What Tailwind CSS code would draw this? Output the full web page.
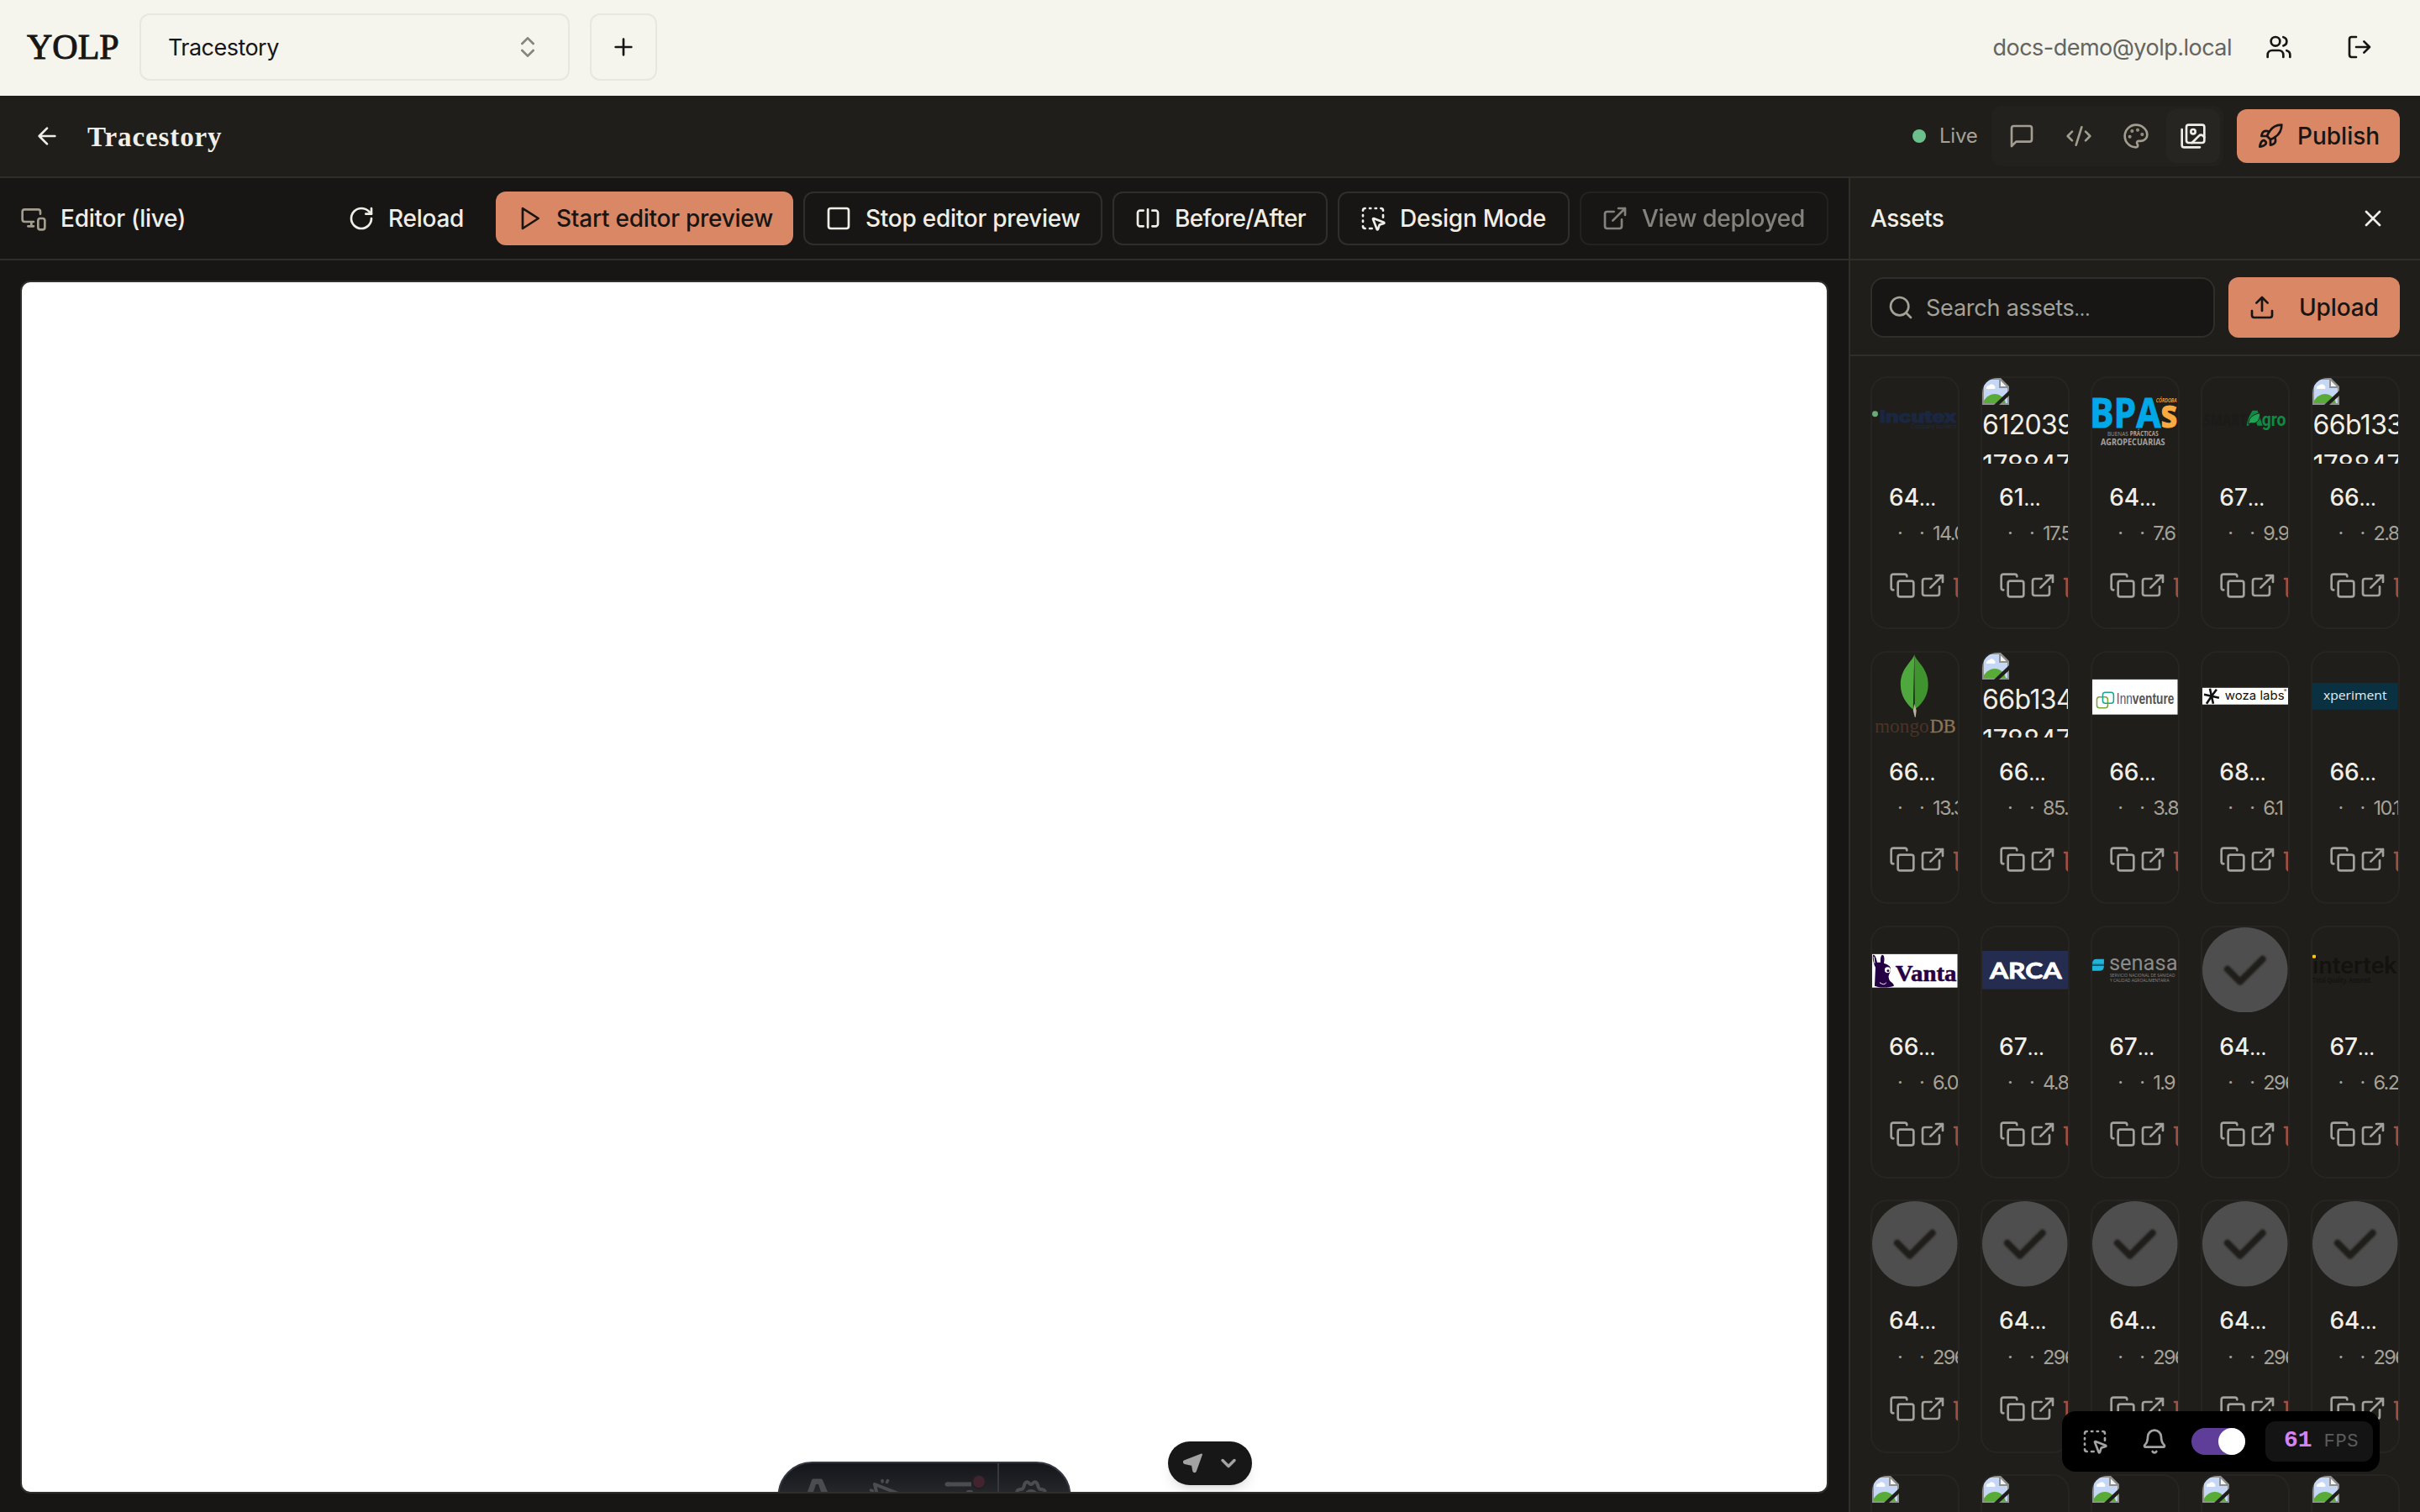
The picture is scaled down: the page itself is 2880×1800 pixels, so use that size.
<!DOCTYPE html>
<html lang="en">
<head>
    <meta charset="UTF-8">
    <meta name="viewport" content="width=device-width, initial-scale=1.0">
    <title>YOLP - Tracestory</title>
    <script src="https://cdn.jsdelivr.net/npm/@tailwindcss/browser@4"></script>
</head>
<body class="h-[1800px] w-[2880px] overflow-hidden bg-[#171614] font-[Inter,sans-serif] text-[28px] leading-none text-[#f0eee6]">
    <svg class="hidden" xmlns="http://www.w3.org/2000/svg">
        <symbol id="chevrons" viewBox="0 0 24 24"><path d="m7 15 5 5 5-5M7 9l5-5 5 5"/></symbol>
        <symbol id="plus" viewBox="0 0 24 24"><path d="M5 12h14M12 5v14"/></symbol>
        <symbol id="users" viewBox="0 0 24 24"><path d="M16 21v-2a4 4 0 0 0-4-4H6a4 4 0 0 0-4 4v2"/><circle cx="9" cy="7" r="4"/><path d="M22 21v-2a4 4 0 0 0-3-3.870M16 3.130a4 4 0 0 1 0 7.750"/></symbol>
        <symbol id="logout" viewBox="0 0 24 24"><path d="m16 17 5-5-5-5M21 12H9M9 21H5a2 2 0 0 1-2-2V5a2 2 0 0 1 2-2h4"/></symbol>
        <symbol id="back" viewBox="0 0 24 24"><path d="m12 19-7-7 7-7M19 12H5"/></symbol>
        <symbol id="message" viewBox="0 0 24 24"><path d="M21 15a2 2 0 0 1-2 2H7l-4 4V5a2 2 0 0 1 2-2h14a2 2 0 0 1 2 2z"/></symbol>
        <symbol id="code" viewBox="0 0 24 24"><path d="m18 16 4-4-4-4M6 8l-4 4 4 4M14.500 4l-5 16"/></symbol>
        <symbol id="palette" viewBox="0 0 24 24"><circle cx="13.500" cy="6.500" r=".5" fill="currentColor"/><circle cx="17.500" cy="10.500" r=".5" fill="currentColor"/><circle cx="8.500" cy="7.500" r=".5" fill="currentColor"/><circle cx="6.500" cy="12.500" r=".5" fill="currentColor"/><path d="M12 2C6.500 2 2 6.500 2 12s4.500 10 10 10c.926 0 1.648-.746 1.648-1.688 0-.437-.18-.835-.437-1.125-.29-.289-.438-.652-.438-1.125a1.640 1.640 0 0 1 1.668-1.668h1.996c3.051 0 5.555-2.503 5.555-5.554C21.965 6.012 17.461 2 12 2z"/></symbol>
        <symbol id="images" viewBox="0 0 24 24"><path d="M18 22H4a2 2 0 0 1-2-2V6"/><path d="m22 13-1.296-1.296a2.410 2.410 0 0 0-3.408 0L11 18"/><circle cx="12" cy="8" r="2"/><rect width="16" height="16" x="6" y="2" rx="2"/></symbol>
        <symbol id="rocket" viewBox="0 0 24 24"><path d="M4.500 16.500c-1.500 1.260-2 5-2 5s3.740-.5 5-2c.71-.84.7-2.130-.09-2.910a2.180 2.180 0 0 0-2.910-.09z"/><path d="m12 15-3-3a22 22 0 0 1 2-3.950A12.880 12.880 0 0 1 22 2c0 2.720-.78 7.500-6 11a22.350 22.350 0 0 1-4 2z"/><path d="M9 12H4s.55-3.030 2-4c1.620-1.080 5 0 5 0M12 15v5s3.030-.55 4-2c1.080-1.620 0-5 0-5"/></symbol>
        <symbol id="monitor" viewBox="0 0 24 24"><path d="M18 8V6a2 2 0 0 0-2-2H4a2 2 0 0 0-2 2v7a2 2 0 0 0 2 2h8M10 19v-3.960 3.150M7 19h5"/><rect width="6" height="10" x="16" y="12" rx="2"/></symbol>
        <symbol id="reload" viewBox="0 0 24 24"><path d="M21 12a9 9 0 1 1-9-9c2.520 0 4.930 1 6.740 2.740L21 8"/><path d="M21 3v5h-5"/></symbol>
        <symbol id="play" viewBox="0 0 24 24"><path d="m6 3 14 9-14 9z"/></symbol>
        <symbol id="stop" viewBox="0 0 24 24"><rect width="18" height="18" x="3" y="3" rx="2"/></symbol>
        <symbol id="split" viewBox="0 0 24 24"><path d="M8 19H5c-1 0-2-1-2-2V7c0-1 1-2 2-2h3M16 5h3c1 0 2 1 2 2v10c0 1-1 2-2 2h-3M12 4v16"/></symbol>
        <symbol id="select" viewBox="0 0 24 24"><path d="M12.034 12.681a.498.498 0 0 1 .647-.647l9 3.500a.5.5 0 0 1-.033.943l-3.444 1.068a1 1 0 0 0-.66.66l-1.067 3.443a.5.5 0 0 1-.943.033zM5 3a2 2 0 0 0-2 2M19 3a2 2 0 0 1 2 2M5 21a2 2 0 0 1-2-2M9 3h1M9 21h2M14 3h1M3 9v1M21 9v2M3 14v1"/></symbol>
        <symbol id="external" viewBox="0 0 24 24"><path d="M15 3h6v6M10 14 21 3M18 13v6a2 2 0 0 1-2 2H5a2 2 0 0 1-2-2V8a2 2 0 0 1 2-2h6"/></symbol>
        <symbol id="close" viewBox="0 0 24 24"><path d="M18 6 6 18M6 6l12 12"/></symbol>
        <symbol id="search" viewBox="0 0 24 24"><circle cx="11" cy="11" r="8"/><path d="m21 21-4.300-4.300"/></symbol>
        <symbol id="upload" viewBox="0 0 24 24"><path d="M12 3v12M17 8l-5-5-5 5M21 15v4a2 2 0 0 1-2 2H5a2 2 0 0 1-2-2v-4"/></symbol>
        <symbol id="copy" viewBox="0 0 24 24"><rect width="14" height="14" x="8" y="8" rx="2"/><path d="M4 16c-1.100 0-2-.9-2-2V4c0-1.100.9-2 2-2h10c1.100 0 2 .9 2 2"/></symbol>
        <symbol id="trash" viewBox="0 0 24 24"><path d="M3 6h18M19 6v14c0 1-1 2-2 2H7c-1 0-2-1-2-2V6M8 6V4c0-1 1-2 2-2h4c1 0 2 1 2 2v2"/></symbol>
        <symbol id="bell" viewBox="0 0 24 24"><path d="M10.268 21a2 2 0 0 0 3.464 0M3.262 15.326A1 1 0 0 0 4 17h16a1 1 0 0 0 .74-1.673C19.410 13.956 18 12.499 18 8A6 6 0 0 0 6 8c0 4.499-1.411 5.956-2.738 7.326"/></symbol>
        <symbol id="chevron-down" viewBox="0 0 24 24"><path d="m6 9 6 6 6-6"/></symbol>
        <symbol id="broken" viewBox="0 0 32 32">
            <path d="M0 0H22L32 10V32H0z" fill="#8f9191"/>
            <path d="M2 2H21V11H30V30H2z" fill="#c6d7f5"/>
            <path d="M5 12a3 3 0 0 1 3-3 4 4 0 0 1 7 1 2.500 2.500 0 0 1 0 3H5z" fill="#fff"/>
            <path d="M2 30v-3c3-5 8-8 13-8 6 0 11 4 13 11z" fill="#58ab36"/>
            <path d="M21 1V11H31z" fill="#f4f4f4" stroke="#8f9191" stroke-width="2"/>
            <path d="M14 32 32 15v6L20 32z" fill="#1f1e1a"/>
        </symbol>
    </svg>

    <div class="flex h-full flex-col">
        <!-- workspace header -->
        <header class="flex h-[114px] shrink-0 items-center bg-[#f5f4ed] pb-0.5 pl-8 pr-8 text-[#171614]">
            <span class="w-[134px] font-['Liberation_Serif',serif] text-[42px] [-webkit-text-stroke:1px_#171614]">YOLP</span>
            <div class="flex h-20 w-[512px] items-center justify-between rounded-xl border-2 border-[#e8e7de] pl-8 pr-8">
                <span class="text-[27px] tracking-[-0.02em]">Tracestory</span>
                <svg class="size-8 fill-none stroke-[#171614] stroke-2 opacity-50 [stroke-linecap:round] [stroke-linejoin:round]"><use href="#chevrons"/></svg>
            </div>
            <div class="ml-6 flex size-20 items-center justify-center rounded-xl border-2 border-[#e8e7de]">
                <svg class="size-8 fill-none stroke-current stroke-2 [stroke-linecap:round] [stroke-linejoin:round]"><use href="#plus"/></svg>
            </div>
            <span class="ml-auto mr-4 text-[27px] tracking-[-0.019em] text-[#66645e]">docs-demo@yolp.local</span>
            <div class="flex size-20 items-center justify-center"><svg class="size-8 fill-none stroke-current stroke-2 [stroke-linecap:round] [stroke-linejoin:round]"><use href="#users"/></svg></div>
            <div class="ml-4 flex size-20 items-center justify-center"><svg class="size-8 fill-none stroke-current stroke-2 [stroke-linecap:round] [stroke-linejoin:round]"><use href="#logout"/></svg></div>
        </header>

        <!-- project bar -->
        <div class="flex h-[98px] shrink-0 items-center border-b-2 border-[#2f2e2b] bg-[#1f1e1a] pl-10 pr-6">
            <svg class="size-8 fill-none stroke-current stroke-2 [stroke-linecap:round] [stroke-linejoin:round]"><use href="#back"/></svg>
            <h1 class="ml-8 pt-0.5 font-['Liberation_Serif',serif] text-[33px] font-bold tracking-[0.9px]">Tracestory</h1>
            <span class="ml-auto size-4 rounded-full bg-[#6cc08b]"></span>
            <span class="ml-4 mr-4 w-[46px] whitespace-nowrap text-[24px] -tracking-[0.01em] text-[#a5a196]">Live</span>
            <div class="flex h-[72px] items-center gap-1 rounded-xl bg-[#22211e] p-1 text-[#a39d8f]">
                <div class="flex size-16 items-center justify-center"><svg class="size-8 fill-none stroke-current stroke-2 [stroke-linecap:round] [stroke-linejoin:round]"><use href="#message"/></svg></div>
                <div class="flex size-16 items-center justify-center"><svg class="size-8 fill-none stroke-current stroke-2 [stroke-linecap:round] [stroke-linejoin:round]"><use href="#code"/></svg></div>
                <div class="flex size-16 items-center justify-center"><svg class="size-8 fill-none stroke-current stroke-2 [stroke-linecap:round] [stroke-linejoin:round]"><use href="#palette"/></svg></div>
                <div class="flex size-16 items-center justify-center rounded-xl bg-[#262522] text-[#f0eee6]"><svg class="size-8 fill-none stroke-current stroke-2 [stroke-linecap:round] [stroke-linejoin:round]"><use href="#images"/></svg></div>
            </div>
            <button class="ml-4 flex h-16 w-[194px] items-center gap-4 whitespace-nowrap rounded-xl bg-[#d98765] pl-6 font-medium text-[#171614]">
                <svg class="size-8 fill-none stroke-current stroke-2 [stroke-linecap:round] [stroke-linejoin:round]"><use href="#rocket"/></svg>
                <span>Publish</span>
            </button>
        </div>

        <div class="flex min-h-0 flex-1">
            <!-- editor -->
            <main class="flex w-[2200px] flex-col">
                <div class="flex h-[98px] shrink-0 items-center gap-3 whitespace-nowrap border-b-2 border-[#2f2e2b] px-6 font-medium tracking-[-0.009em]">
                    <svg class="size-8 fill-none stroke-[#a39d8f] stroke-2 [stroke-linecap:round] [stroke-linejoin:round]"><use href="#monitor"/></svg>
                    <span class="ml-1">Editor (live)</span>
                    <button class="ml-auto flex h-16 w-[188px] items-center gap-4 pl-6">
                        <svg class="size-8 fill-none stroke-current stroke-2 [stroke-linecap:round] [stroke-linejoin:round]"><use href="#reload"/></svg>
                        <span>Reload</span>
                    </button>
                    <button class="flex h-16 w-[354px] items-center gap-4 rounded-xl bg-[#d98765] pl-6 text-[#171614]">
                        <svg class="size-8 fill-none stroke-current stroke-2 [stroke-linecap:round] [stroke-linejoin:round]"><use href="#play"/></svg>
                        <span>Start editor preview</span>
                    </button>
                    <button class="flex h-16 w-[356px] items-center gap-4 rounded-xl border-2 border-[#2f2e2b] pl-6">
                        <svg class="size-8 fill-none stroke-current stroke-2 [stroke-linecap:round] [stroke-linejoin:round]"><use href="#stop"/></svg>
                        <span>Stop editor preview</span>
                    </button>
                    <button class="flex h-16 w-[256px] items-center gap-4 rounded-xl border-2 border-[#2f2e2b] pl-6">
                        <svg class="size-8 fill-none stroke-current stroke-2 [stroke-linecap:round] [stroke-linejoin:round]"><use href="#split"/></svg>
                        <span class="tracking-[-0.024em]">Before/After</span>
                    </button>
                    <button class="flex h-16 w-[276px] items-center gap-4 rounded-xl border-2 border-[#2f2e2b] pl-6">
                        <svg class="size-8 fill-none stroke-current stroke-2 [stroke-linecap:round] [stroke-linejoin:round]"><use href="#select"/></svg>
                        <span>Design Mode</span>
                    </button>
                    <button class="flex h-16 w-[296px] items-center gap-4 rounded-xl border-2 border-[#2f2e2b] pl-6 opacity-50">
                        <svg class="size-8 fill-none stroke-current stroke-2 [stroke-linecap:round] [stroke-linejoin:round]"><use href="#external"/></svg>
                        <span>View deployed</span>
                    </button>
                </div>
                <div class="relative mx-6 mb-[22px] mt-6 flex-1 overflow-hidden rounded-xl border-2 border-[#2f2e2b] bg-white">
                    <!-- dev toolbar peeking out of the preview -->
                    <svg class="absolute bottom-0 left-[898px] h-[38px] w-[352px]" viewBox="0 0 352 38">
                        <defs><linearGradient id="dock" gradientUnits="userSpaceOnUse" x1="0" y1="2" x2="0" y2="38"><stop offset="0" stop-color="#13151a"/><stop offset="1" stop-color="#252629"/></linearGradient></defs>
                        <rect x="2.500" y="3" width="347" height="80" rx="40" fill="url(#dock)" stroke="#343841" stroke-width="2"/>
                        <path d="M264 3v40" stroke="#343841" stroke-width="2"/>
                        <path d="M37 38 42 24q.5-1.500 2-1.500h9q1.500 0 2 1.500l6 14h-8l-3-9h-3l-3 9z" fill="#4b4c50"/>
                        <g fill="none" stroke="#4b4c50" stroke-width="4" stroke-linecap="round" stroke-linejoin="round">
                            <path d="M121 46 117 29 145 40"/>
                            <path d="M126 24.500v1.500M132.500 24.500l-1 2M112.500 36l2 1" stroke-width="3.500"/>
                            <path d="M203 29h29" stroke-width="5" stroke-linecap="butt"/>
                            <path d="M203 29h2" stroke-width="5"/>
                            <path d="M228 38h4"/>
                            <path d="M287 42c-2-5 0-7 4-7 3 0 3-2 4-5 1-4 4-5 6-2q2 2 4 0c2-3 5-2 6 2 1 3 1 5 4 5 4 0 6 2 4 7"/>
                            <circle cx="303" cy="43" r="6"/>
                        </g>
                        <circle cx="241" cy="26" r="9" fill="#1f2024"/>
                        <circle cx="241" cy="26" r="7" fill="#42242f"/>
                    </svg>
                    <div class="absolute bottom-2 left-[1364px] flex h-[52px] w-[100px] items-center rounded-full bg-[#171717] pl-[18px] text-[#a3a3a3] shadow-lg">
                        <svg class="size-6" viewBox="0 0 24 24"><path d="M22 1.500 15 21c-.5 1.600-2.300 1.600-2.800 0L11 14 2 12c-1.600-.5-1.600-2.300 0-2.900z" fill="currentColor" stroke="currentColor" stroke-width="2" stroke-linejoin="round"/></svg>
                        <svg class="ml-[16px] size-7 fill-none stroke-current stroke-3 [stroke-linecap:round] [stroke-linejoin:round]"><use href="#chevron-down"/></svg>
                    </div>
                </div>
            </main>

            <!-- assets panel -->
            <aside class="flex w-[680px] flex-col overflow-hidden border-l-2 border-[#2f2e2b] bg-[#1f1e1a]">
                <div class="flex h-[98px] shrink-0 items-center justify-between border-b-2 border-[#2f2e2b] pl-6 pr-10 font-medium">
                    <h2 class="tracking-[-0.02em]">Assets</h2>
                    <svg class="size-8 fill-none stroke-current stroke-2 [stroke-linecap:round] [stroke-linejoin:round]"><use href="#close"/></svg>
                </div>
                <div class="flex h-[114px] shrink-0 items-center gap-4 border-b-2 border-[#2f2e2b] px-6">
                    <div class="flex h-[72px] flex-1 items-center gap-3.5 rounded-2xl border-2 border-[#2f2e2b] bg-[#171614] pl-[18px] text-[27px] text-[#a5a196]">
                        <svg class="size-8 fill-none stroke-current stroke-2 [stroke-linecap:round] [stroke-linejoin:round]"><use href="#search"/></svg>
                        <span class="tracking-[-0.008em]">Search assets<span class="text-[22px]">…</span></span>
                    </div>
                    <button class="flex h-[72px] w-[204px] items-center gap-7 rounded-xl bg-[#d98765] pl-6 font-medium text-[#171614]">
                        <svg class="size-8 fill-none stroke-current stroke-2 [stroke-linecap:round] [stroke-linejoin:round]"><use href="#upload"/></svg>
                        <span class="-tracking-[0.005em]">Upload</span>
                    </button>
                </div>
                <div id="assets" class="grid grid-cols-5 gap-x-[25.6px] gap-y-[25.4px] px-6 pt-6"></div>
            </aside>
        </div>
    </div>

    <!-- fps overlay -->
    <div class="absolute left-[2454px] top-[1680px] flex h-[72px] w-[378px] items-center rounded-2xl bg-black pl-[23px] text-[#a3a3a3]">
        <svg class="size-8 fill-none stroke-current stroke-2 [stroke-linecap:round] [stroke-linejoin:round]"><use href="#select"/></svg>
        <svg class="ml-[39px] size-8 fill-none stroke-current stroke-2 [stroke-linecap:round] [stroke-linejoin:round]"><use href="#bell"/></svg>
        <div class="ml-7 flex h-8 w-16 justify-end rounded-full bg-[#5f3e9a]"><span class="size-8 rounded-full bg-white"></span></div>
        <div class="ml-6 flex h-12 w-32 items-baseline rounded-xl bg-[#141414] pl-[22px] pt-[9px] font-['Liberation_Mono',monospace]">
            <span class="text-[28px] font-bold text-[#d583f2]">61</span>
            <span class="ml-3.5 text-[22px] tracking-[0.6px] text-[#5c5c5c]">FPS</span>
        </div>
    </div>

    <script>
        const check = `
            <circle cx="51" cy="51" r="51" fill="#4e4e4e"/>
            <path d="M30 50 45 65 72 38" fill="none" stroke="#1f1e1a" stroke-width="8" stroke-linecap="round" stroke-linejoin="round" class="blur-[1px]"/>`;

        const logos = {
            incutex: `
                <circle cx="3.500" cy="43" r="3.500" fill="#66ab78"/>
                <text x="9" y="53" textLength="92" lengthAdjust="spacingAndGlyphs" font-family="Inter, sans-serif" font-weight="800" font-size="19" fill="#1b2740" stroke="#1b2740">incutex</text>
                <text x="46" y="60" textLength="55" lengthAdjust="spacingAndGlyphs" font-family="Inter, sans-serif" font-size="7" fill="#1f2a40">Company builders</text>`,
            bpas: `
                <text x="-3" y="59" textLength="85" lengthAdjust="spacingAndGlyphs" font-family="Open Sans, sans-serif" font-weight="700" font-size="48" fill="#00a8e8" stroke="#00a8e8">BPA</text>
                <text x="82" y="59" textLength="20" lengthAdjust="spacingAndGlyphs" font-family="Open Sans, sans-serif" font-weight="700" font-size="47" fill="#faab40" stroke="#faab40">s</text>
                <text x="76" y="29" textLength="25" lengthAdjust="spacingAndGlyphs" font-family="Open Sans, sans-serif" font-style="italic" font-weight="600" font-size="7.500" fill="#faab40">CÓRDOBA</text>
                <text x="18" y="69" textLength="25" lengthAdjust="spacingAndGlyphs" font-family="Open Sans, sans-serif" font-size="8" fill="#999">BUENAS</text>
                <text x="45" y="69" textLength="34" lengthAdjust="spacingAndGlyphs" font-family="Open Sans, sans-serif" font-weight="700" font-size="8" fill="#a3a3a3">PRÁCTICAS</text>
                <text x="10" y="80" textLength="77" lengthAdjust="spacingAndGlyphs" font-family="Open Sans, sans-serif" font-weight="700" font-size="11.500" fill="#a3a3a3">AGROPECUARIAS</text>`,
            agro: `
                <text x="1" y="57" textLength="52" lengthAdjust="spacingAndGlyphs" font-family="Open Sans, sans-serif" font-weight="800" font-size="20" fill="#1b1c1a">SMART</text>
                <path d="M53 57c1-8 4-13 7-18h6l6 18h-6l-2-5-6 1-3 4z" fill="#0f8a43"/>
                <path d="M55 55c0-8 7-12 14-13 0 9-4 13-11 12z" fill="#1fa355" stroke="#1f1e1a"/>
                <text x="71" y="57" textLength="29" lengthAdjust="spacingAndGlyphs" font-family="Roboto, sans-serif" font-weight="700" font-size="23" fill="#0f8a43">gro</text>`,
            mongo: `
                <path d="M50.500 2C49 10 34 18 34 38c0 14 7 23 15 30z" fill="#4fa83d"/>
                <path d="M50.500 2C52 10 67 18 67 38c0 14-7 23-16 30z" fill="#40942f"/>
                <path d="M50.500 61 49 69l2 8h1l1-8z" fill="#b9b19a"/>
                <text x="3" y="95" textLength="65" lengthAdjust="spacingAndGlyphs" font-family="Liberation Serif, serif" font-size="23" fill="#4b3326">mongo</text>
                <text x="69" y="95" textLength="31" lengthAdjust="spacingAndGlyphs" font-family="Liberation Serif, serif" font-size="23" fill="#8f7451" stroke="#8f7451" stroke-width=".4">DB</text>`,
            innventure: `
                <rect y="32" width="102" height="42" fill="#fff"/>
                <rect x="5.500" y="53" width="13" height="13" rx="3" fill="none" stroke="#7da63c" stroke-width="1.600"/>
                <rect x="12.500" y="47.500" width="13" height="13" rx="3" fill="none" stroke="#18a594" stroke-width="1.600"/>
                <text x="29" y="61" textLength="19" lengthAdjust="spacingAndGlyphs" font-family="Liberation Sans, sans-serif" font-size="19" fill="#555">Inn</text>
                <text x="48" y="61" textLength="50" lengthAdjust="spacingAndGlyphs" font-family="Liberation Sans, sans-serif" font-weight="700" font-size="19" fill="#555">venture</text>`,
            woza: `
                <rect y="42" width="104" height="20" fill="#fff"/>
                <path d="M11 52 9 43M11 52l6-8M11 52l9 2M11 52l2 9M11 52l-6 9M11 52l-9-2" stroke="#111" stroke-width="2.600"/>
                <text x="27" y="56" textLength="71" lengthAdjust="spacingAndGlyphs" font-family="Inter, sans-serif" font-size="14.500" fill="#111">woza labs</text>
                <text x="97.500" y="47.500" font-family="Inter, sans-serif" font-size="5" fill="#111">®</text>`,
            xperiment: `
                <rect y="36" width="102" height="32" fill="#0a3142"/>
                <text x="13" y="56" textLength="76" lengthAdjust="spacingAndGlyphs" font-family="Open Sans, sans-serif" font-size="14" fill="#e6edf0">xperiment</text>`,
            vanta: `
                <rect y="32" width="102" height="40" fill="#fff"/>
                <path d="M1 33c3-1 4 5 5 9l4 0c0-4 0-8 2-9 3 0 3 6 2 10 6 2 9 4 8 9-1 4-3 5-2 9 1 5 6 5 6 9-5 2-16 3-23 0l1-22C2 44 0 38 1 33z" fill="#240044"/>
                <circle cx="18.500" cy="51" r="3.500" fill="#fff"/><circle cx="19" cy="52" r="1.500" fill="#240044"/>
                <path d="M9 66q5 4 8 0M2 35l1 8" fill="none" stroke="#fff" stroke-width="1"/>
                <text x="28" y="64" textLength="73" lengthAdjust="spacingAndGlyphs" font-family="Liberation Serif, serif" font-weight="700" font-size="27" fill="#240044" stroke="#240044" stroke-width=".5">Vanta</text>`,
            arca: `
                <rect y="28" width="104" height="46" fill="#242c4f"/>
                <text x="9" y="61" textLength="86" lengthAdjust="spacingAndGlyphs" font-family="Lato, sans-serif" font-weight="700" font-size="27" fill="#fff" stroke="#fff" stroke-width=".8">ARCA</text>`,
            senasa: `
                <path d="M5 38h9v6H0q0-6 5-6zM0 46h14q0 6-5 6H0z" fill="#22b4d8"/>
                <path d="M0 45h14" stroke="#176a80" stroke-width="1.500"/>
                <text x="20" y="51" textLength="82" lengthAdjust="spacingAndGlyphs" font-family="Roboto, sans-serif" font-size="25" fill="#8b8b8b">senasa</text>
                <text x="21" y="59" textLength="78" lengthAdjust="spacingAndGlyphs" font-family="Open Sans, sans-serif" font-size="5.500" fill="#888">SERVICIO NACIONAL DE SANIDAD</text>
                <text x="21" y="65" textLength="71" lengthAdjust="spacingAndGlyphs" font-family="Open Sans, sans-serif" font-size="5.500" fill="#888">Y CALIDAD AGROALIMENTARIA</text>`,
            intertek: `
                <text x="0" y="55" textLength="101" lengthAdjust="spacingAndGlyphs" font-family="Roboto, sans-serif" font-weight="500" font-size="27" fill="#15110f">intertek</text>
                <rect y="33" width="4" height="4" rx="1" fill="#fdc800"/>
                <text x="0" y="66" textLength="71" lengthAdjust="spacingAndGlyphs" font-family="Open Sans, sans-serif" font-weight="600" font-size="8" fill="#15110f">Total Quality. Assured.</text>`,
            check
        };

        // logo (or broken image alt lines), short name, size
        const assets = [
            ["incutex", "64", "14.0"], [["612039", "178847"], "61", "17.5"], ["bpas", "64", "7.6"], ["agro", "67", "9.9"], [["66b133", "178847"], "66", "2.8"],
            ["mongo", "66", "13.3"], [["66b134", "178847"], "66", "85.2"], ["innventure", "66", "3.8"], ["woza", "68", "6.1"], ["xperiment", "66", "10.1"],
            ["vanta", "66", "6.0"], ["arca", "67", "4.8"], ["senasa", "67", "1.9"], ["check", "64", "296"], ["intertek", "67", "6.2"],
            ["check", "64", "296"], ["check", "64", "296"], ["check", "64", "296"], ["check", "64", "296"], ["check", "64", "296"],
            [["", ""], "", ""], [["", ""], "", ""], [["", ""], "", ""], [["", ""], "", ""], [["", ""], "", ""]
        ];

        document.getElementById("assets").innerHTML = assets.map(([logo, name, size]) => {
            const thumb = Array.isArray(logo)
                ? `<svg class="size-8"><use href="#broken"/></svg>
                   <div class="text-[32px] leading-[48px] -tracking-[0.02em]">${logo[0]}<br>${logo[1]}</div>`
                : `<svg class="size-full" viewBox="0 0 102 102">${logos[logo]}</svg>`;
            return `
                <div class="h-[301.4px] overflow-hidden whitespace-nowrap rounded-[20px] border-2 border-[#262521]">
                    <div class="aspect-square overflow-hidden">${thumb}</div>
                    <div class="pl-5 pt-[21.5px]">
                        <div class="h-[39px] text-[28px] font-medium leading-[39px]">${name}<span class="text-[22px]">…</span></div>
                        <div class="mt-1.5 flex h-[34px] items-center text-[23.5px] text-[#a5a196] -tracking-[0.07em]">
                            <span class="w-[26px] shrink-0 pl-2.5">·</span><span class="w-[26px] shrink-0 pl-2.5">·</span><span class="shrink-0">${size}</span>
                        </div>
                        <div class="mt-3.5 flex h-[61px] items-center text-[#a3a19b]">
                            <svg class="size-8 shrink-0 fill-none stroke-current stroke-2 [stroke-linecap:round] [stroke-linejoin:round]"><use href="#copy"/></svg>
                            <svg class="ml-1 size-8 shrink-0 fill-none stroke-current stroke-2 [stroke-linecap:round] [stroke-linejoin:round]"><use href="#external"/></svg>
                            <svg class="ml-1.5 size-8 shrink-0 fill-none stroke-[#a04f43] stroke-2 [stroke-linecap:round] [stroke-linejoin:round]"><use href="#trash"/></svg>
                        </div>
                    </div>
                </div>`;
        }).join("");
    </script>
</body>
</html>
